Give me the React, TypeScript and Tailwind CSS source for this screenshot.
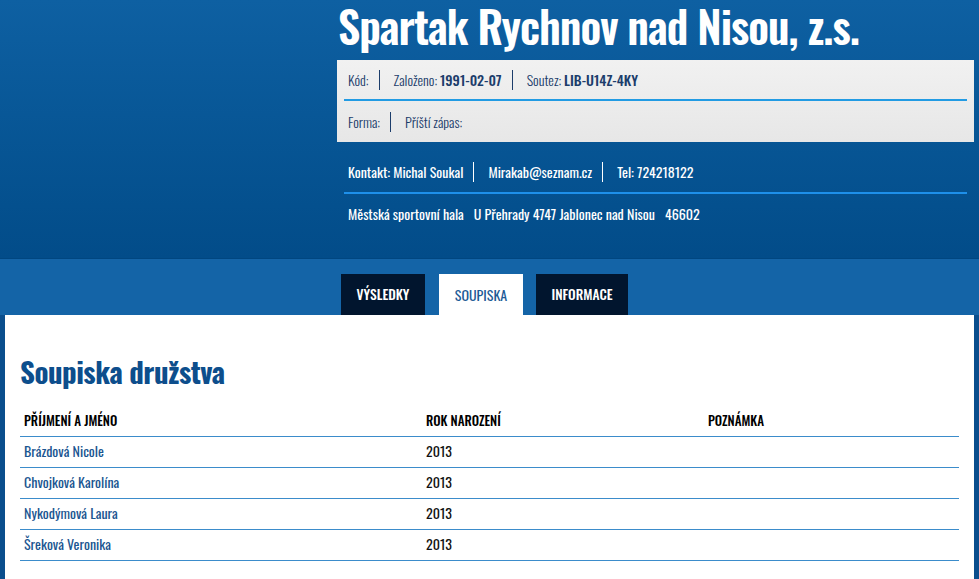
import React from "react";

const players = [
  { name: "Brázdová Nicole", year: "2013", note: "" },
  { name: "Chvojková Karolína", year: "2013", note: "" },
  { name: "Nykodýmová Laura", year: "2013", note: "" },
  { name: "Šreková Veronika", year: "2013", note: "" },
];

function Sep({ light }: { light?: boolean }) {
  return (
    <span
      className={
        light
          ? "mr-[14px] ml-[10px] h-[20px] w-px bg-white"
          : "mr-[14px] ml-[10px] h-[20px] w-px bg-[#1c3d6b]"
      }
    />
  );
}

export default function App() {
  return (
    <div className="min-h-[579px] bg-[#0a4e8d] font-['Oswald','Roboto_Condensed',sans-serif]">
      <header className="h-[259px] border-b border-[#004680] bg-gradient-to-b from-[#0e60a2] to-[#024c89] pr-[5px] pl-[337px]">
        <div className="h-[60px] pl-[1px]">
          <h1 className="text-[44px] leading-[52px] font-semibold tracking-[-1px] text-white">
            Spartak Rychnov nad Nisou, z.s.
          </h1>
        </div>

        <div className="bg-gradient-to-b from-[#f1f1f1] to-[#e7e7e7] px-[7px] text-[14px] font-light text-[#1c3d6b]">
          <div className="flex h-[41px] items-center border-b-2 border-[#229be3] pl-1">
            <span>Kód:</span>
            <Sep />
            <span>
              Založeno: <b className="font-medium">1991-02-07</b>
            </span>
            <Sep />
            <span>
              Soutez: <b className="font-medium">LIB-U14Z-4KY</b>
            </span>
          </div>
          <div className="flex h-[41px] items-center pl-1">
            <span>Forma:</span>
            <Sep />
            <span>Příští zápas:</span>
          </div>
        </div>

        <div className="mt-[10px] px-[7px] text-[14px] font-normal text-white">
          <div className="flex h-[42px] items-center border-b-2 border-[#1e90ea] pb-[1px] pl-1">
            <span>Kontakt: Michal Soukal</span>
            <Sep light />
            <span>Mirakab@seznam.cz</span>
            <Sep light />
            <span>Tel: 724218122</span>
          </div>
          <div className="flex h-[40px] items-center gap-[10px] pb-[1px] pl-1">
            <span>Městská sportovní hala</span>
            <span>U Přehrady 4747 Jablonec nad Nisou</span>
            <span>46602</span>
          </div>
        </div>
      </header>

      <nav className="flex h-[56px] items-end bg-[#1464a7] pl-[341px] uppercase">
        <a className="flex h-[41px] w-[84px] items-center justify-center bg-[#01152e] text-[13.5px] font-medium text-white">
          Výsledky
        </a>
        <a className="ml-[14px] flex h-[41px] w-[84px] items-center justify-center bg-white text-[14px] text-[#1c5a96]">
          Soupiska
        </a>
        <a className="ml-[13px] flex h-[41px] w-[92px] items-center justify-center bg-[#01152e] text-[13.5px] font-medium text-white">
          Informace
        </a>
      </nav>

      <main className="px-[5px]">
        <div className="min-h-[264px] bg-white px-[15px] pt-[38px]">
          <h2 className="text-[29px] leading-[36px] font-bold tracking-[-0.5px] text-[#0d4e8c]">
            Soupiska družstva
          </h2>
          <div className="mt-[17px]">
            <div className="grid h-[31px] grid-cols-[403px_282px_1fr] items-center border-b border-[#3b8ccb] text-[13px] font-medium text-black uppercase">
              <span className="pl-[4px]">Příjmení a jméno</span>
              <span className="pl-[3px]">Rok narození</span>
              <span className="pl-[3px]">Poznámka</span>
            </div>
            {players.map((p) => (
              <div
                key={p.name}
                className="grid h-[31px] grid-cols-[403px_282px_1fr] items-center border-b border-[#3b8ccb] pb-[3px] text-[14px] font-normal"
              >
                <span className="pl-[4px] text-[#1b5691]">{p.name}</span>
                <span className="pl-[3px] text-[#111]">{p.year}</span>
                <span className="pl-[3px] text-[#111]">{p.note}</span>
              </div>
            ))}
          </div>
        </div>
      </main>
    </div>
  );
}
